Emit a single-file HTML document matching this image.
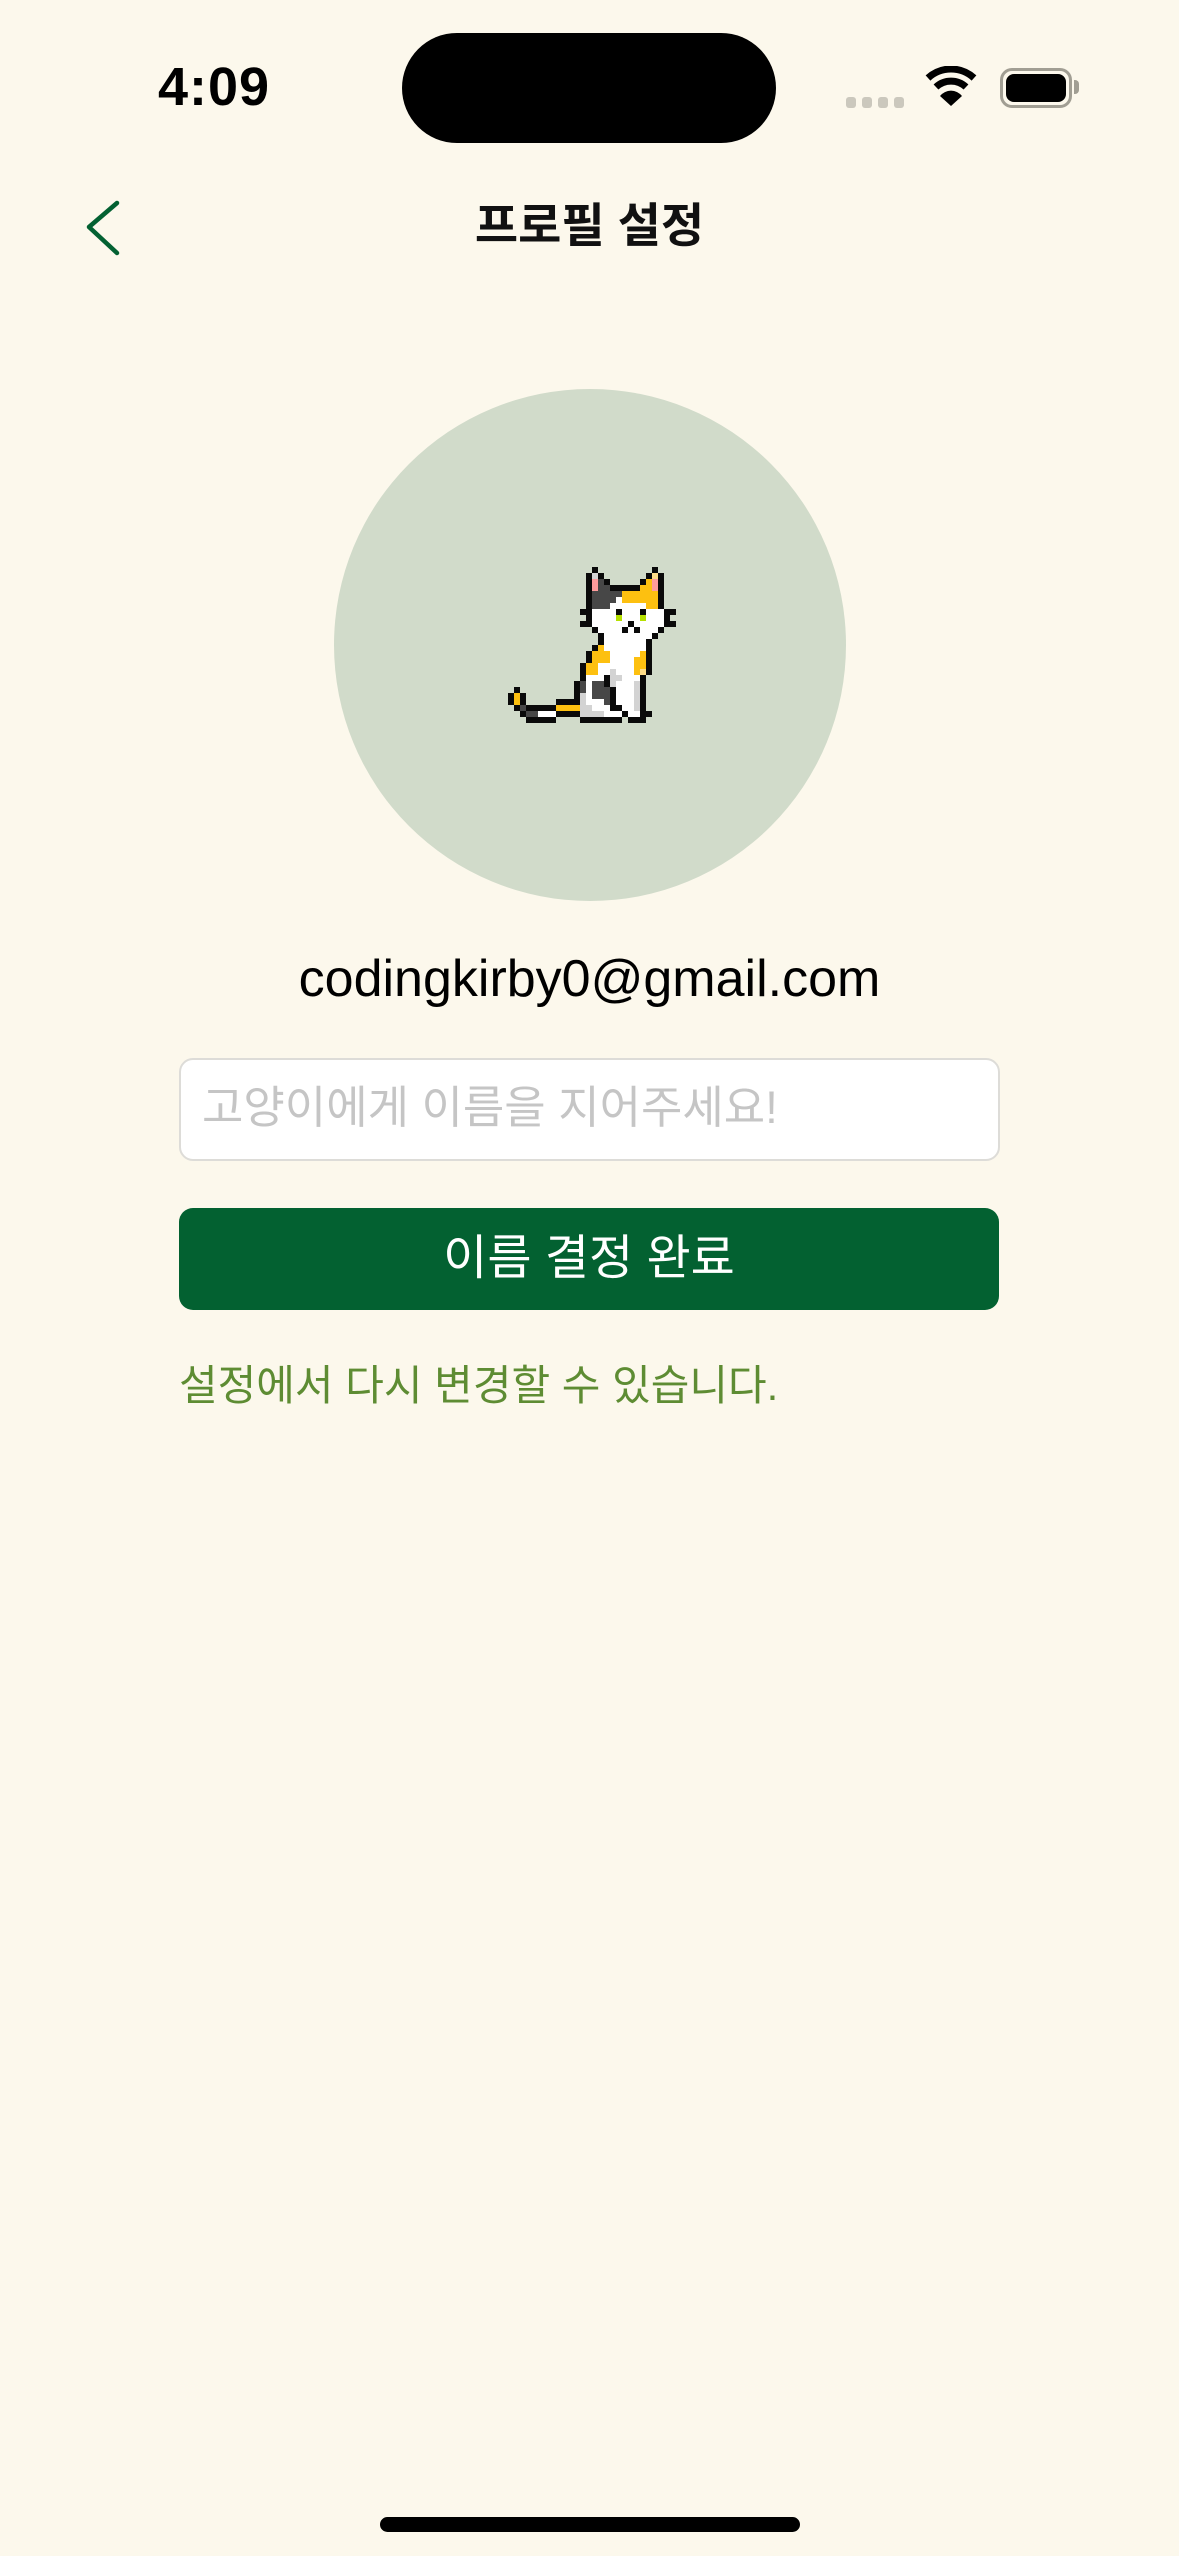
<!DOCTYPE html>
<html><head><meta charset="utf-8">
<style>
html,body{margin:0;padding:0}
body{width:1179px;height:2556px;background:#fcf8ec;position:relative;overflow:hidden;font-family:"Liberation Sans","Noto Sans CJK KR",sans-serif}
.abs{position:absolute}
</style></head><body>
<div class="abs" style="left:158px;top:57px;font-size:54px;font-weight:bold;color:#000;line-height:60px;letter-spacing:1px">4:09</div>
<div class="abs" style="left:402px;top:33px;width:374px;height:110px;background:#000;border-radius:55px"></div>
<div class="abs" style="left:846px;top:97px;width:10px;height:11px;background:#cbc8bd;border-radius:3px"></div>
<div class="abs" style="left:862px;top:97px;width:10px;height:11px;background:#cbc8bd;border-radius:3px"></div>
<div class="abs" style="left:878px;top:97px;width:10px;height:11px;background:#cbc8bd;border-radius:3px"></div>
<div class="abs" style="left:894px;top:97px;width:10px;height:11px;background:#cbc8bd;border-radius:3px"></div>
<svg class="abs" style="left:925px;top:66px" width="52" height="42" viewBox="0 0 52 42">
<path d="M3 12 A34 34 0 0 1 49 12" stroke="#000" stroke-width="7" fill="none"/>
<path d="M11 21 A22 22 0 0 1 41 21" stroke="#000" stroke-width="7" fill="none"/>
<path d="M26 40 L15 30 A14 14 0 0 1 37 30 Z" fill="#000"/>
</svg>
<div class="abs" style="left:1000px;top:68px;width:66px;height:34px;border:3px solid #a19e93;border-radius:12px"></div>
<div class="abs" style="left:1006px;top:74px;width:60px;height:28px;background:#000;border-radius:8px"></div>
<div class="abs" style="left:1074px;top:80px;width:5px;height:14px;background:#a19e93;border-radius:0 4px 4px 0"></div>
<svg class="abs" style="left:80px;top:195px" width="50" height="65" viewBox="0 0 50 65">
<path d="M37 8 L9 32 L37 58" stroke="#036132" stroke-width="4.5" fill="none" stroke-linecap="round" stroke-linejoin="round"/>
</svg>
<div class="abs" style="left:0;width:1179px;top:196px;text-align:center;font-size:47px;font-weight:bold;line-height:60px;color:#111">프로필 설정</div>
<div class="abs" style="left:334px;top:389px;width:512px;height:512px;border-radius:50%;background:#d1dbca"></div>
<svg class="abs" id="cat" style="left:502px;top:555px" width="180" height="180" viewBox="0 0 180 180" shape-rendering="crispEdges"></svg>
<div class="abs" style="left:0;width:1179px;top:949px;text-align:center;font-size:52px;line-height:60px;color:#000">codingkirby0@gmail.com</div>
<div class="abs" style="left:179px;top:1058px;width:817px;height:99px;background:#fff;border:2px solid #dddcd8;border-radius:14px"></div>
<div class="abs" style="left:202px;top:1078px;font-size:45px;line-height:60px;color:#c5c5c5">고양이에게 이름을 지어주세요!</div>
<div class="abs" style="left:179px;top:1208px;width:820px;height:102px;background:#036131;border-radius:14px;color:#fff;font-size:48px;line-height:102px;text-align:center">이름 결정 완료</div>
<div class="abs" style="left:179px;top:1356px;font-size:42px;line-height:60px;color:#5e8c33">설정에서 다시 변경할 수 있습니다.</div>
<div class="abs" style="left:380px;top:2517px;width:420px;height:15px;background:#000;border-radius:8px"></div>
<script>
var C={K:'#0a0a0a',W:'#ffffff',G:'#474747',L:'#d3d3d3',O:'#fdc010',P:'#ff9c9c',Y:'#fedd88',E:'#b5e000'};
var R={
2:[[15,15,'K'],[25,25,'K']],
3:[[14,14,'K'],[15,15,'L'],[16,16,'K'],[24,24,'K'],[25,25,'Y'],[26,26,'K']],
4:[[14,14,'K'],[15,15,'P'],[16,16,'G'],[17,17,'K'],[23,23,'K'],[24,24,'O'],[25,25,'P'],[26,26,'K']],
5:[[14,14,'K'],[15,15,'P'],[16,17,'G'],[18,22,'K'],[23,24,'O'],[25,25,'P'],[26,26,'K']],
6:[[14,14,'K'],[15,19,'G'],[20,25,'O'],[26,26,'K']],
7:[[14,14,'K'],[15,18,'G'],[19,19,'W'],[20,25,'O'],[26,26,'K']],
8:[[14,14,'K'],[15,17,'G'],[18,23,'W'],[24,25,'O'],[26,26,'K']],
9:[[13,14,'K'],[15,18,'W'],[19,19,'K'],[20,22,'W'],[23,23,'K'],[24,26,'W'],[27,28,'K']],
10:[[14,14,'K'],[15,18,'W'],[19,19,'E'],[20,22,'W'],[23,23,'E'],[24,26,'W'],[27,27,'K']],
11:[[13,14,'K'],[15,20,'W'],[21,21,'K'],[22,26,'W'],[27,28,'K']],
12:[[15,15,'K'],[16,19,'W'],[20,20,'K'],[21,21,'W'],[22,22,'K'],[23,25,'W'],[26,26,'K']],
13:[[16,16,'K'],[17,24,'W'],[25,25,'K']],
14:[[16,16,'K'],[17,23,'W'],[24,24,'K']],
15:[[15,15,'K'],[16,16,'O'],[17,23,'W'],[24,24,'K']],
16:[[14,14,'K'],[15,17,'O'],[18,22,'W'],[23,23,'O'],[24,24,'K']],
17:[[14,14,'K'],[15,17,'O'],[18,21,'W'],[22,23,'O'],[24,24,'K']],
18:[[13,13,'K'],[14,15,'O'],[16,21,'W'],[22,23,'O'],[24,24,'K']],
19:[[13,13,'K'],[14,15,'O'],[16,17,'W'],[18,18,'L'],[19,21,'W'],[22,22,'O'],[23,23,'Y'],[24,24,'K']],
20:[[13,13,'K'],[14,16,'W'],[17,17,'K'],[18,19,'L'],[20,22,'W'],[23,23,'K']],
21:[[12,12,'K'],[13,13,'G'],[14,14,'W'],[15,16,'G'],[17,17,'K'],[18,18,'L'],[19,21,'W'],[22,22,'L'],[23,23,'K']],
22:[[2,2,'K'],[12,12,'K'],[13,13,'G'],[14,14,'W'],[15,17,'G'],[18,18,'K'],[19,21,'W'],[22,22,'L'],[23,23,'K']],
23:[[1,1,'K'],[2,2,'O'],[3,3,'K'],[12,12,'K'],[13,13,'L'],[14,14,'W'],[15,17,'G'],[18,18,'K'],[19,21,'W'],[22,22,'L'],[23,23,'K']],
24:[[1,1,'K'],[2,2,'O'],[3,3,'K'],[9,12,'K'],[13,13,'L'],[14,16,'W'],[17,17,'G'],[18,18,'K'],[19,21,'W'],[22,22,'L'],[23,23,'K']],
25:[[2,2,'K'],[3,3,'G'],[4,8,'K'],[9,12,'O'],[13,14,'L'],[15,17,'W'],[18,19,'K'],[20,21,'W'],[22,22,'L'],[23,23,'K']],
26:[[3,3,'K'],[4,5,'G'],[6,8,'W'],[9,12,'K'],[13,16,'L'],[17,19,'W'],[20,20,'K'],[21,22,'W'],[23,24,'K']],
27:[[4,8,'K'],[13,19,'K'],[21,23,'K']]
};
var s='';
for(var r in R){R[r].forEach(function(a){s+='<rect x="'+a[0]*6+'" y="'+r*6+'" width="'+(a[1]-a[0]+1)*6+'" height="6" fill="'+C[a[2]]+'"/>';});}
document.getElementById('cat').innerHTML=s;
</script>
</body></html>
